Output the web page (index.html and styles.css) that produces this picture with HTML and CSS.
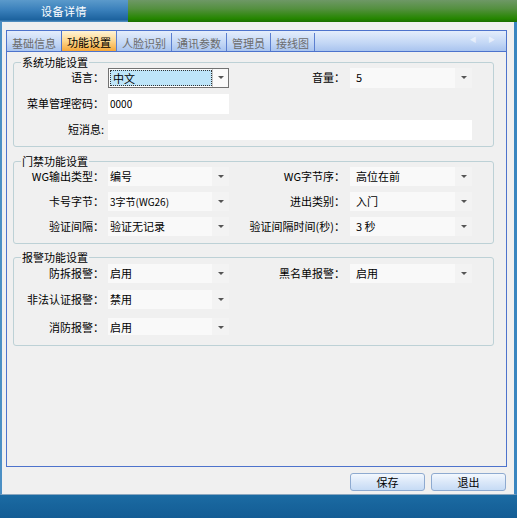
FILE: index.html
```html
<!DOCTYPE html>
<html lang="zh-CN">
<head>
  <meta charset="UTF-8" />
  <title>设备详情</title>
  <link rel="stylesheet" href="styles.css">
</head>
<body>
  <div class="window">
    <!-- barra de título -->
    <div class="titlebar">
      <div class="title">设备详情</div>
      <div class="titlefill"></div>
    </div>

    <div class="body">
      <div class="tabs">
        <div class="tabstrip">
          <span class="tab">基础信息</span>
          <span class="tab active">功能设置</span>
          <span class="tab">人脸识别</span>
          <span class="tab">通讯参数</span>
          <span class="tab">管理员</span>
          <span class="tab">接线图</span>
          <span class="scroll">◀ ▶</span>
        </div>

        <div class="tabpage">
          <fieldset class="group g1">
            <legend>系统功能设置</legend>
            <div class="rows">
              <label>语言：</label>
              <div class="combo focus"><span class="val">中文</span><span class="arrow"></span></div>
              <label class="right">音量：</label>
              <div class="combo r"><span class="val">5</span><span class="arrow"></span></div>

              <label>菜单管理密码：</label>
              <div class="edit">0000</div>
              <span></span><span></span>

              <label>短消息:</label>
              <div class="edit wide"></div>
            </div>
          </fieldset>

          <fieldset class="group g2">
            <legend>门禁功能设置</legend>
            <div class="rows">
              <label>WG输出类型：</label>
              <div class="combo"><span class="val">编号</span><span class="arrow"></span></div>
              <label class="right">WG字节序：</label>
              <div class="combo r"><span class="val">高位在前</span><span class="arrow"></span></div>

              <label>卡号字节：</label>
              <div class="combo"><span class="val small">3字节(WG26)</span><span class="arrow"></span></div>
              <label class="right">进出类别：</label>
              <div class="combo r"><span class="val">入门</span><span class="arrow"></span></div>

              <label>验证间隔：</label>
              <div class="combo"><span class="val">验证无记录</span><span class="arrow"></span></div>
              <label class="right">验证间隔时间(秒)：</label>
              <div class="combo r"><span class="val">3 秒</span><span class="arrow"></span></div>
            </div>
          </fieldset>

          <fieldset class="group g3">
            <legend>报警功能设置</legend>
            <div class="rows">
              <label>防拆报警：</label>
              <div class="combo"><span class="val">启用</span><span class="arrow"></span></div>
              <label class="right">黑名单报警：</label>
              <div class="combo r"><span class="val">启用</span><span class="arrow"></span></div>

              <label>非法认证报警：</label>
              <div class="combo"><span class="val">禁用</span><span class="arrow"></span></div>
              <span></span><span></span>

              <label class="last">消防报警：</label>
              <div class="combo last"><span class="val">启用</span><span class="arrow"></span></div>
            </div>
          </fieldset>
        </div>
      </div>

      <div class="buttons">
        <button>保存</button>
        <button>退出</button>
      </div>
    </div>

    <div class="statusbar"></div>
  </div>
</body>
</html>
```

FILE: styles.css
```css
* {
  margin: 0;
  padding: 0;
  box-sizing: border-box;
  font-family: "Noto Sans CJK SC", "DejaVu Sans", sans-serif;
}

body {
  width: 517px;
  height: 518px;
  overflow: hidden;
  background: #f0f0f0;
}

.window {
  display: flex;
  flex-direction: column;
  height: 518px;
}

.titlebar {
  display: flex;
  height: 22px;
}

.title {
  width: 128px;
  color: #fff;
  font-size: 11px;
  letter-spacing: 0.5px;
  line-height: 22px;
  text-align: center;
  background: linear-gradient(#5b9acb, #3a80bb 45%, #1c629e 90%, #5d97c6);
}

.titlefill {
  flex: 1;
  background: linear-gradient(#6e9866, #54903f 40%, #258600 85%, #1b6f00);
}

.body {
  height: 473px;
  border-left: 2px solid #4b8fc4;
  border-right: 3px solid #3a86c0;
  border-bottom: 1px solid #8aa7c0;
  padding: 8px 7px 0 4px;
  background: #f0f0f0;
}

.tabs {
  height: 437px;
  border: 1px solid #4d73cc;
  background: #f0f0f0;
}

.tabstrip {
  display: flex;
  position: relative;
  height: 21px;
  border-bottom: 1px solid #4d73cc;
  background: linear-gradient(#e4edfb, #c3d7f5 60%, #a9c4ef);
}

.tab {
  padding: 0 5px;
  border-right: 1px solid #5b7fd0;
  font-size: 11px;
  line-height: 20px;
  color: #6b6b6b;
  margin: 2px 0 0;
}

.tab.active {
  margin: 0;
  line-height: 22px;
  color: #000;
  border-left: 1px solid #4d73cc;
  margin-left: -1px;
  background: linear-gradient(#fff4d6, #fcd68d 50%, #f5a73a);
}

.scroll {
  position: absolute;
  right: 6px;
  top: 3px;
  font-size: 7px;
  letter-spacing: 5px;
  color: rgba(255, 255, 255, 0.55);
}

.group {
  border: 1px solid #bdd1d6;
  border-radius: 3px;
  margin: 0 12px 0 6px;
  padding: 0 20px 6px 0;
  min-width: 0;
}

.group legend {
  margin-left: 7px;
  padding: 0 1px;
  font-size: 11px;
  line-height: 12px;
  color: #000;
}

.g1 { margin-top: 4px; }
.g2 { margin-top: 8px; padding-bottom: 7px; }
.g3 { margin-top: 7px; padding-top: 1px; padding-bottom: 10px; }

.rows {
  display: grid;
  grid-template-columns: 94px 121px 121px 122px;
  grid-auto-rows: 20px;
  row-gap: 6px;
}

.g2 .rows { grid-auto-rows: 19px; }
.g3 .rows { grid-auto-rows: 19px; row-gap: 7px; }
.g3 .last { margin-top: 2px; }

.rows label {
  font-size: 11px;
  text-align: right;
  padding-right: 4px;
  line-height: 19px;
  white-space: nowrap;
  color: #000;
}

.rows label.right {
  padding-right: 5px;
}

.combo {
  display: flex;
  background: #f9f9f9;
  font-size: 11px;
  line-height: 19px;
}

.combo .val {
  flex: 1;
  padding-left: 2px;
}

.combo.r .val {
  padding-left: 6px;
}

.combo .val.small {
  font-size: 10px;
}

.combo .arrow {
  width: 17px;
  position: relative;
  background: #f3f3f3;
}

.combo .arrow::after {
  content: '';
  position: absolute;
  left: 6px;
  top: 8px;
  border-left: 3px solid transparent;
  border-right: 3px solid transparent;
  border-top: 3px solid #555;
}

.combo.focus {
  border: 1px solid #727272;
  background: #fdfdfd;
  line-height: 16px;
}

.combo.focus .val {
  margin: 1px 0 1px 1px;
  padding-left: 2px;
  border: 1px dotted #333;
  background: #bee5f9;
  line-height: 14px;
}

.combo.focus .arrow {
  width: 16px;
  border-left: 1px solid #c8c8c8;
  background: #fafafa;
}

.combo.focus .arrow::after {
  top: 7px;
  left: 5px;
}

.edit {
  background: #fff;
  font-size: 10px;
  line-height: 20px;
  padding-left: 2px;
}

.edit.wide {
  grid-column: 2 / 5;
}

.buttons {
  display: flex;
  justify-content: flex-end;
  gap: 6px;
  padding: 6px 1px 0 0;
}

.buttons button {
  width: 75px;
  height: 18px;
  border: 1px solid #8eaad0;
  border-radius: 3px;
  background: linear-gradient(#f3f8fe, #dbe8f9 50%, #c6dbf5);
  font-size: 11px;
  line-height: 16px;
  color: #000;
}

.statusbar {
  flex: 1;
  background: linear-gradient(#1b6ba3, #135c94);
}
```
